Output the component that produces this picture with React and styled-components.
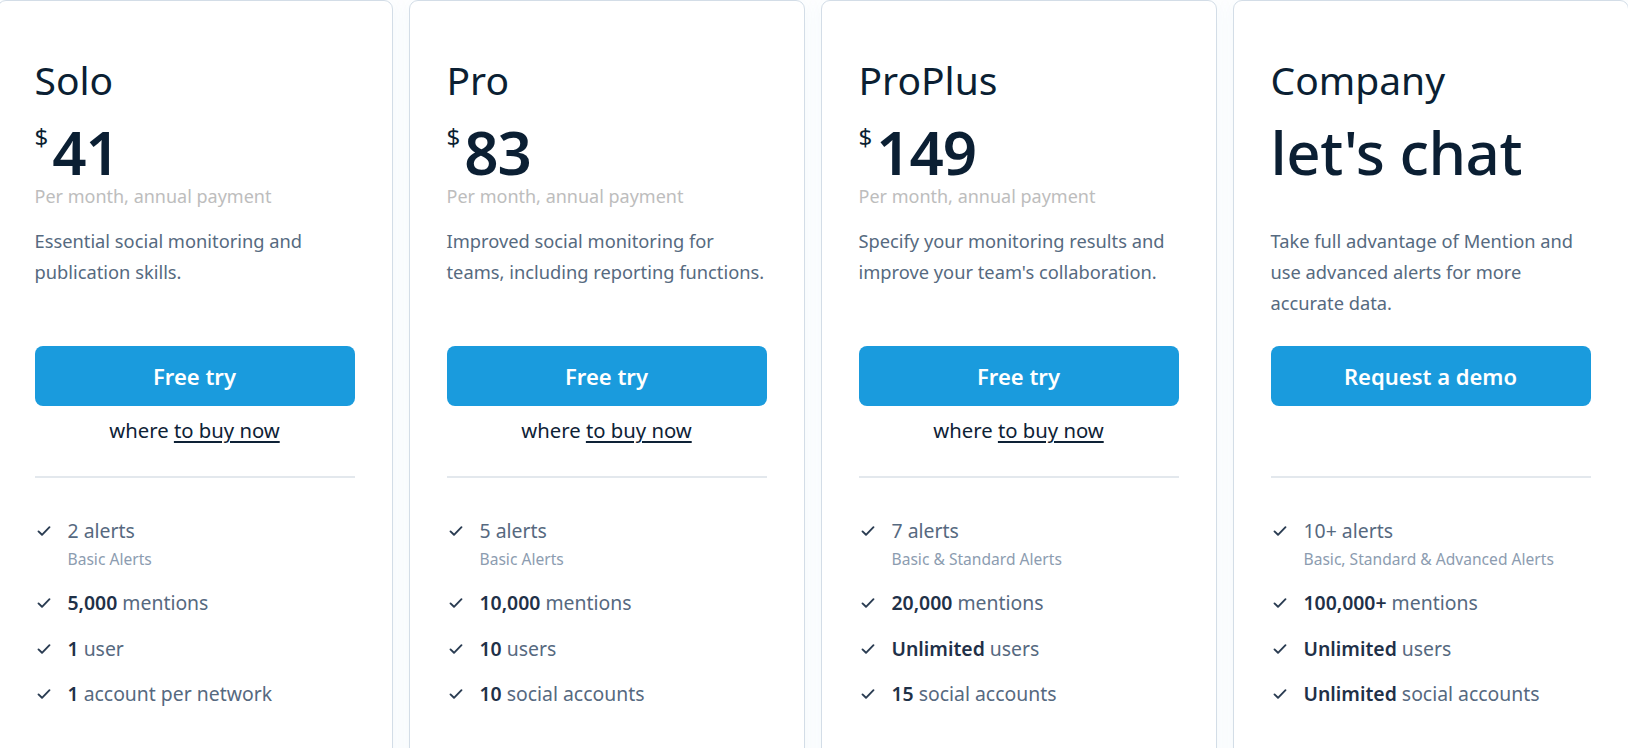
import React from "react";
import styled, { createGlobalStyle } from "styled-components";

const GlobalStyle = createGlobalStyle`
  html, body {
    margin: 0;
    padding: 0;
    background: #ffffff;
    overflow: hidden;
  }
  body {
    font-family: "Noto Sans", "Open Sans", sans-serif;
    color: #0b1f33;
  }
`;

const plans = [
  {
    name: "Solo",
    price: "41",
    desc: "Essential social monitoring and publication skills.",
    cta: "Free try",
    buy: true,
    features: [
      { text: "2 alerts", sub: "Basic Alerts" },
      { strong: "5,000", text: "mentions" },
      { strong: "1", text: "user" },
      { strong: "1", text: "account per network" },
    ],
  },
  {
    name: "Pro",
    price: "83",
    desc: "Improved social monitoring for teams, including reporting functions.",
    cta: "Free try",
    buy: true,
    features: [
      { text: "5 alerts", sub: "Basic Alerts" },
      { strong: "10,000", text: "mentions" },
      { strong: "10", text: "users" },
      { strong: "10", text: "social accounts" },
    ],
  },
  {
    name: "ProPlus",
    price: "149",
    desc: "Specify your monitoring results and improve your team's collaboration.",
    cta: "Free try",
    buy: true,
    features: [
      { text: "7 alerts", sub: "Basic & Standard Alerts" },
      { strong: "20,000", text: "mentions" },
      { strong: "Unlimited", text: "users" },
      { strong: "15", text: "social accounts" },
    ],
  },
  {
    name: "Company",
    chat: "let's chat",
    desc: "Take full advantage of Mention and use advanced alerts for more accurate data.",
    cta: "Request a demo",
    buy: false,
    features: [
      { text: "10+ alerts", sub: "Basic, Standard & Advanced Alerts" },
      { strong: "100,000+", text: "mentions" },
      { strong: "Unlimited", text: "users" },
      { strong: "Unlimited", text: "social accounts" },
    ],
  },
];

const Row = styled.div`
  display: flex;
  justify-content: center;
  gap: 16px;
  width: 100%;
  box-sizing: border-box;
  padding-right: 3px;
  overflow: hidden;
`;

const Card = styled.div`
  flex: 0 0 396px;
  box-sizing: border-box;
  height: 780px;
  padding: 53px 37px 0;
  background: #ffffff;
  border: 1px solid #d3dde7;
  border-radius: 9px;
  box-shadow: 0 0 22px rgba(30, 130, 200, 0.05);
  display: flex;
  flex-direction: column;
`;

const Name = styled.h2`
  margin: 0;
  font-size: 39px;
  line-height: 52px;
  font-weight: 400;
  color: #0b1f33;
`;

const Price = styled.div`
  display: flex;
  align-items: flex-start;
  box-sizing: border-box;
  height: 78px;
  padding-top: 14px;
  color: #0b1f33;
`;

const Currency = styled.span`
  font-size: 24px;
  line-height: 30px;
  margin-top: 2px;
  margin-right: 4px;
`;

const Amount = styled.span`
  font-size: 60px;
  line-height: 64px;
  font-weight: 600;
  letter-spacing: -1px;
`;

const Chat = styled.div`
  box-sizing: border-box;
  height: 102px;
  padding-top: 14px;
  font-size: 60px;
  line-height: 64px;
  font-weight: 500;
  color: #0b1f33;
  letter-spacing: -0.5px;
`;

const Period = styled.div`
  font-size: 18px;
  line-height: 24px;
  color: #bdbdbd;
  height: 24px;
`;

const Desc = styled.p`
  margin: 17px 0 0;
  height: 121px;
  font-size: 18.3px;
  line-height: 31px;
  color: #566a80;
`;

const Button = styled.a`
  display: flex;
  align-items: center;
  justify-content: center;
  height: 60px;
  border-radius: 8px;
  background: #1a9bdd;
  color: #ffffff;
  font-size: 22px;
  font-weight: 600;
  text-decoration: none;
`;

const Buy = styled.div`
  height: 70px;
  padding-top: 2px;
  box-sizing: border-box;
  text-align: center;
  font-size: 20.3px;
  line-height: 44px;
  color: #0e2236;

  span {
    text-decoration: underline;
    text-underline-offset: 3px;
    text-decoration-thickness: 1.5px;
  }
`;

const Divider = styled.hr`
  margin: 0;
  border: none;
  height: 2px;
  background: #e3e8ed;
`;

const List = styled.ul`
  list-style: none;
  margin: 37px 0 0;
  padding: 0;
  display: flex;
  flex-direction: column;
  gap: 13.5px;
`;

const Item = styled.li`
  display: grid;
  grid-template-columns: 33px 1fr;
  align-items: start;
`;

const Check = styled.svg`
  width: 14px;
  height: 14px;
  margin-top: 9px;
  margin-left: 2px;
`;

const ItemText = styled.div`
  font-size: 19.4px;
  line-height: 32px;
  color: #56697f;

  b {
    font-weight: 600;
    color: #1f3148;
  }
`;

const Sub = styled.div`
  font-size: 15.6px;
  line-height: 22px;
  color: #8c9cb0;
  margin: 1px 0 3.5px;
`;

function CheckIcon() {
  return (
    <Check viewBox="0 0 14 14" fill="none">
      <path d="M1.5 7.4 L5 10.8 L12.5 3.2" stroke="#2a3c52" strokeWidth="1.9" strokeLinecap="round" strokeLinejoin="round" />
    </Check>
  );
}

function PlanCard({ plan }) {
  return (
    <Card>
      <Name>{plan.name}</Name>
      {plan.chat ? (
        <Chat>{plan.chat}</Chat>
      ) : (
        <>
          <Price>
            <Currency>$</Currency>
            <Amount>{plan.price}</Amount>
          </Price>
          <Period>Per month, annual payment</Period>
        </>
      )}
      <Desc>{plan.desc}</Desc>
      <Button href="#">{plan.cta}</Button>
      <Buy>
        {plan.buy && (
          <>
            where <span>to buy now</span>
          </>
        )}
      </Buy>
      <Divider />
      <List>
        {plan.features.map((f, i) => (
          <Item key={i}>
            <CheckIcon />
            <ItemText>
              {f.strong && <b>{f.strong}</b>} {f.text}
              {f.sub && <Sub>{f.sub}</Sub>}
            </ItemText>
          </Item>
        ))}
      </List>
    </Card>
  );
}

export default function App() {
  return (
    <>
      <GlobalStyle />
      <Row>
        {plans.map((p) => (
          <PlanCard key={p.name} plan={p} />
        ))}
      </Row>
    </>
  );
}
